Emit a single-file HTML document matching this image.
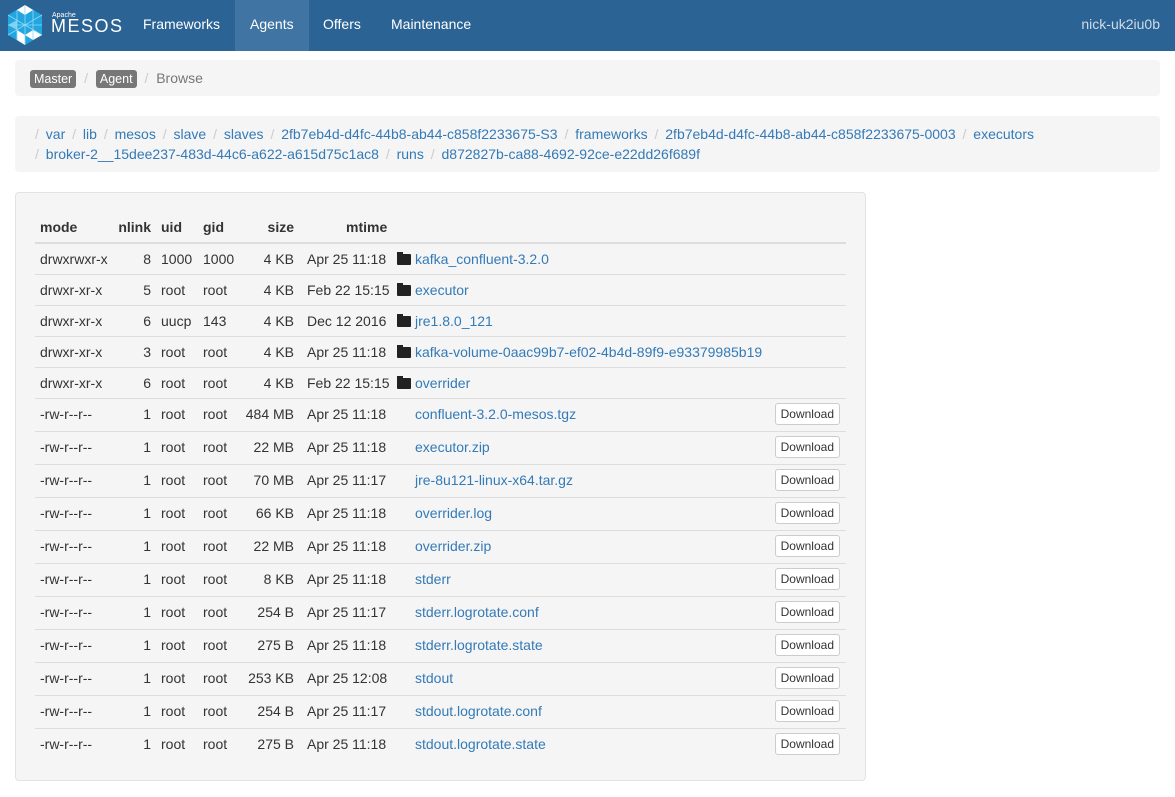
<!DOCTYPE html>
<html><head><meta charset="utf-8"><style>
*{box-sizing:border-box}
body{margin:0;font-family:"Liberation Sans",sans-serif;font-size:14px;color:#333;background:#fff;width:1175px;height:797px;overflow:hidden}
a{color:#337ab7;text-decoration:none}
.nav{height:51px;background:#2b6395;position:relative;color:#fff}
.nav .it{position:absolute;top:0;height:51px;line-height:48px;font-size:14px;padding:0 15px}
.bc{position:absolute;left:15px;width:1145px;background:#f5f5f5;border-radius:4px}
.sep{color:#ccc;padding:0 3px}
.b1 .sep{padding:0 4px}
.lbl{background:#777;color:#fff;font-size:12.5px;padding:2px 4px;border-radius:3px}
.panel{position:absolute;left:15px;top:192px;width:851px;height:589px;background:#f5f5f5;border:1px solid #e3e3e3;border-radius:4px}
table{position:absolute;left:19px;top:18px;width:811px;border-collapse:collapse;table-layout:fixed}
th{font-weight:bold;text-align:left;height:32px;border-bottom:2px solid #ddd;padding:0 5px;vertical-align:middle}
td{padding:0 5px;border-top:1px solid #ddd;white-space:nowrap;vertical-align:middle}
tr.d td{height:31px}tr.f td{height:33px;padding-bottom:1px}
td:nth-child(6){padding-left:8px}
.r{text-align:right}
.btn{display:inline-block;border:1px solid #ccc;border-radius:3px;background:#fff;font-size:12px;height:22px;line-height:20px;padding:0 5px;color:#333}
.fo{display:inline-block;width:14px;height:11px;background:#222;margin-right:4px;vertical-align:-1px;position:relative;border-radius:1px}
.fo:before{content:"";position:absolute;left:0;top:-2px;width:6px;height:3px;background:#222}
</style></head><body>
<div class="nav">
<svg style="position:absolute;left:7px;top:5px" width="36" height="40" viewBox="0 0 36 40">
<polygon points="18,0 35,10 35,30 18,40 1,30 1,10" fill="#22a6e0"/>
<polygon points="18,0 26,5 18,10 10,5" fill="#fff"/>
<polygon points="26,25 35,30 26,35 18,30" fill="#fff"/>
<polygon points="10,25 18,30 18,40 10,35" fill="#fff"/>
<polygon points="1,20 10,15 10,25" fill="#7fd0f0"/>
<path d="M1,10 L35,30 M1,30 L35,10 M18,0 V40 M1,20 H35 M10,5 V35 M26,5 V35" stroke="#8fd8f5" stroke-width=".8" fill="none"/>
</svg>
<div style="position:absolute;left:52px;top:12px;font-size:7px;color:#fff">Apache</div>
<div style="position:absolute;left:51px;top:16px;font-size:18px;letter-spacing:1.5px;color:#fff">MESOS</div>
<div class="it" style="left:128px">Frameworks</div>
<div class="it" style="left:235px;background:#3f74a3">Agents</div>
<div class="it" style="left:308px">Offers</div>
<div class="it" style="left:376px">Maintenance</div>
<div class="it" style="right:0;color:#cfdbe6">nick-uk2iu0b</div>
</div>
<div class="bc b1" style="top:60px;height:36px;padding:9px 15px;line-height:18px"><span class="lbl">Master</span> <span class="sep">/</span> <span class="lbl">Agent</span> <span class="sep">/</span> <span style="color:#777">Browse</span></div>
<div class="bc" style="top:116px;height:56px;padding:8px 20px;line-height:20px"><span class="sep" style="padding-left:0">/</span> <a>var</a> <span class="sep">/</span> <a>lib</a> <span class="sep">/</span> <a>mesos</a> <span class="sep">/</span> <a>slave</a> <span class="sep">/</span> <a>slaves</a> <span class="sep">/</span> <a>2fb7eb4d-d4fc-44b8-ab44-c858f2233675-S3</a> <span class="sep">/</span> <a>frameworks</a> <span class="sep">/</span> <a>2fb7eb4d-d4fc-44b8-ab44-c858f2233675-0003</a> <span class="sep">/</span> <a>executors</a><br><span class="sep" style="padding-left:0">/</span> <a>broker-2__15dee237-483d-44c6-a622-a615d75c1ac8</a> <span class="sep">/</span> <a>runs</a> <span class="sep">/</span> <a>d872827b-ca88-4692-92ce-e22dd26f689f</a></div>
<div class="panel"><table>
<colgroup><col style="width:78px"><col style="width:43px"><col style="width:42px"><col style="width:42px"><col style="width:59px"><col style="width:93px"><col><col style="width:80px"></colgroup>
<tr><th>mode</th><th class="r">nlink</th><th>uid</th><th>gid</th><th class="r">size</th><th style="padding-left:47px;overflow:visible">mtime</th><th></th><th></th></tr>
<tr class="d"><td>drwxrwxr-x</td><td class="r">8</td><td>1000</td><td>1000</td><td class="r">4 KB</td><td>Apr 25 11:18</td><td><span class="fo"></span><a>kafka_confluent-3.2.0</a></td><td></td></tr>
<tr class="d"><td>drwxr-xr-x</td><td class="r">5</td><td>root</td><td>root</td><td class="r">4 KB</td><td>Feb 22 15:15</td><td><span class="fo"></span><a>executor</a></td><td></td></tr>
<tr class="d"><td>drwxr-xr-x</td><td class="r">6</td><td>uucp</td><td>143</td><td class="r">4 KB</td><td>Dec 12 2016</td><td><span class="fo"></span><a>jre1.8.0_121</a></td><td></td></tr>
<tr class="d"><td>drwxr-xr-x</td><td class="r">3</td><td>root</td><td>root</td><td class="r">4 KB</td><td>Apr 25 11:18</td><td style="overflow:visible"><span class="fo"></span><a>kafka-volume-0aac99b7-ef02-4b4d-89f9-e93379985b19</a></td><td></td></tr>
<tr class="d"><td>drwxr-xr-x</td><td class="r">6</td><td>root</td><td>root</td><td class="r">4 KB</td><td>Feb 22 15:15</td><td><span class="fo"></span><a>overrider</a></td><td></td></tr>
<tr class="f"><td>-rw-r--r--</td><td class="r">1</td><td>root</td><td>root</td><td class="r">484 MB</td><td>Apr 25 11:18</td><td style="padding-left:23px"><a>confluent-3.2.0-mesos.tgz</a></td><td class="r" style="padding-right:6px"><span class="btn">Download</span></td></tr>
<tr class="f"><td>-rw-r--r--</td><td class="r">1</td><td>root</td><td>root</td><td class="r">22 MB</td><td>Apr 25 11:18</td><td style="padding-left:23px"><a>executor.zip</a></td><td class="r" style="padding-right:6px"><span class="btn">Download</span></td></tr>
<tr class="f"><td>-rw-r--r--</td><td class="r">1</td><td>root</td><td>root</td><td class="r">70 MB</td><td>Apr 25 11:17</td><td style="padding-left:23px"><a>jre-8u121-linux-x64.tar.gz</a></td><td class="r" style="padding-right:6px"><span class="btn">Download</span></td></tr>
<tr class="f"><td>-rw-r--r--</td><td class="r">1</td><td>root</td><td>root</td><td class="r">66 KB</td><td>Apr 25 11:18</td><td style="padding-left:23px"><a>overrider.log</a></td><td class="r" style="padding-right:6px"><span class="btn">Download</span></td></tr>
<tr class="f"><td>-rw-r--r--</td><td class="r">1</td><td>root</td><td>root</td><td class="r">22 MB</td><td>Apr 25 11:18</td><td style="padding-left:23px"><a>overrider.zip</a></td><td class="r" style="padding-right:6px"><span class="btn">Download</span></td></tr>
<tr class="f"><td>-rw-r--r--</td><td class="r">1</td><td>root</td><td>root</td><td class="r">8 KB</td><td>Apr 25 11:18</td><td style="padding-left:23px"><a>stderr</a></td><td class="r" style="padding-right:6px"><span class="btn">Download</span></td></tr>
<tr class="f"><td>-rw-r--r--</td><td class="r">1</td><td>root</td><td>root</td><td class="r">254 B</td><td>Apr 25 11:17</td><td style="padding-left:23px"><a>stderr.logrotate.conf</a></td><td class="r" style="padding-right:6px"><span class="btn">Download</span></td></tr>
<tr class="f"><td>-rw-r--r--</td><td class="r">1</td><td>root</td><td>root</td><td class="r">275 B</td><td>Apr 25 11:18</td><td style="padding-left:23px"><a>stderr.logrotate.state</a></td><td class="r" style="padding-right:6px"><span class="btn">Download</span></td></tr>
<tr class="f"><td>-rw-r--r--</td><td class="r">1</td><td>root</td><td>root</td><td class="r">253 KB</td><td>Apr 25 12:08</td><td style="padding-left:23px"><a>stdout</a></td><td class="r" style="padding-right:6px"><span class="btn">Download</span></td></tr>
<tr class="f"><td>-rw-r--r--</td><td class="r">1</td><td>root</td><td>root</td><td class="r">254 B</td><td>Apr 25 11:17</td><td style="padding-left:23px"><a>stdout.logrotate.conf</a></td><td class="r" style="padding-right:6px"><span class="btn">Download</span></td></tr>
<tr class="f"><td>-rw-r--r--</td><td class="r">1</td><td>root</td><td>root</td><td class="r">275 B</td><td>Apr 25 11:18</td><td style="padding-left:23px"><a>stdout.logrotate.state</a></td><td class="r" style="padding-right:6px"><span class="btn">Download</span></td></tr>
</table></div>
</body></html>
